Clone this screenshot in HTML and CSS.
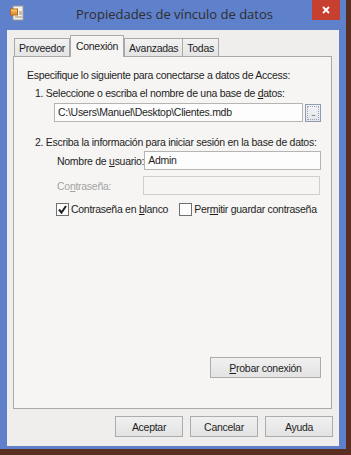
FILE: index.html
```html
<!DOCTYPE html>
<html lang="es">
<head>
  <meta charset="UTF-8" />
  <title>Propiedades de vínculo de datos</title>
  <link rel="stylesheet" href="styles.css">
</head>
<body>

  <div class="window">
    <div class="titlebar">
      <svg class="app-icon" width="14" height="16" viewBox="0 0 14 16">
        <rect x="3" y="1" width="10" height="14" fill="#f4f1ea" stroke="#9a9a9a"/>
        <rect x="0.5" y="4" width="7" height="6" fill="#e59a3c" stroke="#b36a1c"/>
        <rect x="1" y="4.5" width="6" height="2" fill="#f6c26b"/>
        <line x1="9" y1="7" x2="12" y2="7" stroke="#9c8b6a"/>
        <line x1="9" y1="9" x2="12" y2="9" stroke="#9c8b6a"/>
        <line x1="5" y1="12" x2="12" y2="12" stroke="#9c8b6a"/>
      </svg>
      <div class="title">Propiedades de vínculo de datos</div>
      <div class="close">
        <svg width="10" height="10" viewBox="0 0 10 10">
          <path d="M2 2 L8 8 M8 2 L2 8" stroke="#fff" stroke-width="1.8"/>
        </svg>
      </div>
    </div>

    <div class="client">
      <div class="tabs">
        <div class="tab">Proveedor</div>
        <div class="tab active">Conexión</div>
        <div class="tab">Avanzadas</div>
        <div class="tab">Todas</div>
      </div>

      <div class="panel">
        <p class="intro">Especifique lo siguiente para conectarse a datos de Access:</p>
        <p class="step">1. Seleccione o escriba el nombre de una base de <u>d</u>atos:</p>
        <div class="db-row">
          <div class="field db-field">C:\Users\Manuel\Desktop\Clientes.mdb</div>
          <div class="browse"><span class="dots">...</span></div>
        </div>

        <p class="step step-two">2. Escriba la información para iniciar sesión en la base de datos:</p>
        <div class="login-row">
          <span class="row-label">Nombre de <u>u</u>suario:</span>
          <div class="field login-field">Admin</div>
        </div>
        <div class="login-row pass-row">
          <span class="row-label disabled">Co<u>n</u>traseña:</span>
          <div class="field login-field pass-field"></div>
        </div>

        <div class="check-row">
          <label class="check">
            <span class="box">
              <svg width="11" height="11" viewBox="0 0 11 11">
                <path d="M2 5.5 L4.5 8.5 L9 2" fill="none" stroke="#222" stroke-width="2"/>
              </svg>
            </span>
            <span>Contraseña en <u>b</u>lanco</span>
          </label>
          <label class="check">
            <span class="box"></span>
            <span>Per<u>m</u>itir guardar contraseña</span>
          </label>
        </div>

        <div class="test-row">
          <button class="btn test-btn"><u>P</u>robar conexión</button>
        </div>
      </div>

      <div class="actions">
        <button class="btn">Aceptar</button>
        <button class="btn">Cancelar</button>
        <button class="btn">Ayuda</button>
      </div>
    </div>
  </div>

</body>
</html>
```

FILE: styles.css
```css
/* General */
body {
  margin: 0;
  width: 351px;
  height: 455px;
  background: #5b2e22;
  font-family: "Liberation Sans", Arial, sans-serif;
  font-size: 10.5px;
  letter-spacing: -0.28px;
  color: #1e1e1e;
  overflow: hidden;
  white-space: nowrap;
}

/* Window frame */
.window {
  width: 346px;
  height: 449px;
  background: #5f80cb;
  padding: 0 7px 3px 7px;
  box-sizing: border-box;
  display: flex;
  flex-direction: column;
}

.titlebar {
  height: 30px;
  display: flex;
  align-items: center;
  position: relative;
}

.app-icon {
  margin-left: 3px;
  margin-top: -4px;
}

.title {
  flex: 1;
  text-align: center;
  font-family: "Open Sans", "Noto Sans", sans-serif;
  font-size: 13px;
  letter-spacing: 0;
  color: #2e2e2e;
  margin-top: -2px;
  margin-right: 14px;
}

.close {
  position: absolute;
  top: 0;
  right: -1px;
  width: 28px;
  height: 20px;
  background: #c7402f;
  display: flex;
  align-items: center;
  justify-content: center;
}

/* Client area */
.client {
  flex: 1;
  background: #efeeec;
  display: flex;
  flex-direction: column;
  padding: 5px 7px 0 6px;
}

.tabs {
  display: flex;
  align-items: flex-end;
  height: 21px;
  padding-left: 1px;
  position: relative;
  z-index: 1;
}

.tab {
  height: 18px;
  line-height: 18px;
  padding: 0 4px;
  border: 1px solid #a9a9a9;
  border-bottom: none;
  background: linear-gradient(#f2f2f2, #e4e4e4);
  box-sizing: border-box;
  margin-right: -1px;
}

.tab.active {
  height: 22px;
  line-height: 20px;
  background: #f6f5f3;
  padding: 0 5px;
  margin-bottom: -1px;
  margin-right: 0;
  margin-left: 1px;
}

.panel {
  height: 353px;
  background: #f6f5f3;
  border: 1px solid #a9a9a9;
  box-sizing: border-box;
  display: flex;
  flex-direction: column;
}

.panel p {
  margin: 0;
  line-height: 14px;
}

.intro {
  margin: 11px 0 0 13px !important;
}

.step {
  margin: 4px 0 0 21px !important;
}

.step-two {
  margin-top: 13px !important;
}

/* Fields */
.db-row {
  display: flex;
  margin: 3px 0 0 40px;
  gap: 2px;
}

.field {
  height: 19px;
  line-height: 17px;
  border: 1px solid #b4b4b4;
  background: #fdfdfd;
  padding: 0 3px;
  box-sizing: border-box;
}

.db-field {
  width: 249px;
}

.browse {
  width: 16px;
  height: 18px;
  margin-top: 1px;
  border: 1px solid #8e9bb0;
  background: linear-gradient(#f3f4f7, #e2e5ea);
  box-sizing: border-box;
  padding: 1px;
}

.dots {
  display: block;
  height: 100%;
  border: 1px dotted #9aa3b3;
  box-sizing: border-box;
  font-size: 8px;
  line-height: 14px;
  text-align: center;
  letter-spacing: -1px;
  color: #333;
}

/* Login rows: field pinned to the right end of a fixed-width row */
.login-row {
  display: flex;
  align-items: center;
  width: 263px;
  margin: 2px 0 0 43px;
}

.pass-row {
  margin-top: 6px;
}

.login-field {
  width: 177px;
  margin-left: auto;
  flex-shrink: 0;
}

.disabled {
  color: #a4a4a4;
}

.pass-field {
  background: #f6f5f3;
  border-color: #cfcfcf;
}

/* Checkboxes */
.check-row {
  display: flex;
  gap: 11px;
  margin: 7px 0 0 42px;
  line-height: 14px;
}

.check {
  display: flex;
  align-items: center;
  gap: 2px;
}

.box {
  width: 13px;
  height: 13px;
  border: 1px solid #6f6f6f;
  background: #fdfdfd;
  box-sizing: border-box;
  display: flex;
  align-items: center;
  justify-content: center;
}

/* Buttons */
.btn {
  font-family: "Liberation Sans", Arial, sans-serif;
  font-size: 10.5px;
  letter-spacing: -0.28px;
  color: #1e1e1e;
  height: 21px;
  border: 1px solid #acacac;
  background: linear-gradient(#f0f0f0, #e3e3e3);
  padding: 0;
  box-sizing: border-box;
}

.test-row {
  margin-top: auto;
  margin-bottom: 30px;
  display: flex;
  justify-content: flex-end;
  padding-right: 10px;
}

.test-btn {
  width: 111px;
}

.actions {
  display: flex;
  justify-content: flex-end;
  gap: 7px;
  margin-top: 7px;
  margin-right: -1px;
}

.actions .btn {
  width: 68px;
}
```
